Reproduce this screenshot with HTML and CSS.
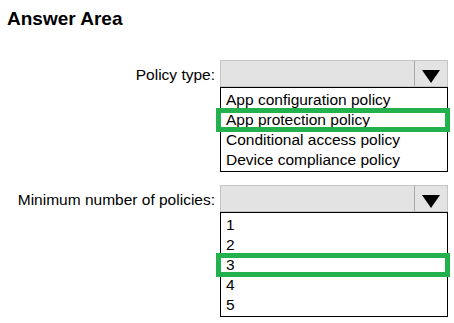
FILE: index.html
```html
<!DOCTYPE html>
<html lang="en">
<head>
  <meta charset="UTF-8">
  <meta name="viewport" content="width=device-width, initial-scale=1.0">
  <title>Answer Area</title>
  <link rel="stylesheet" href="styles.css">
</head>
<body>
  <h1 class="title">Answer Area</h1>

  <div class="answers">
    <div class="field-label">Policy type:</div>
    <div class="picker">
      <div class="picker-box"><span class="picker-arrow"></span></div>
      <ul class="picker-list">
        <li>App configuration policy</li>
        <li class="picked">App protection policy</li>
        <li>Conditional access policy</li>
        <li>Device compliance policy</li>
      </ul>
    </div>

    <div class="field-label">Minimum number of policies:</div>
    <div class="picker">
      <div class="picker-box"><span class="picker-arrow"></span></div>
      <ul class="picker-list">
        <li>1</li>
        <li>2</li>
        <li class="picked">3</li>
        <li>4</li>
        <li>5</li>
      </ul>
    </div>
  </div>
</body>
</html>
```

FILE: styles.css
```css
* {
  margin: 0;
  padding: 0;
  box-sizing: border-box;
}

body {
  background-color: #fff;
  color: #000;
  font-family: 'Liberation Sans', Arial, sans-serif;
  font-size: 15.5px;
  width: 454px;
  height: 323px;
  overflow: hidden;
}

.title {
  font-size: 19px;
  font-weight: bold;
  line-height: 22px;
  padding: 8px 0 0 7px;
  margin-bottom: 30px;
}

.answers {
  display: grid;
  grid-template-columns: 215px 228px;
  column-gap: 5px;
  row-gap: 13px;
}

.field-label {
  text-align: right;
  line-height: 20px;
  margin-top: 5px;
}

.picker-box {
  height: 27px;
  background-color: #e3e3e3;
  border: 1px solid #c4c4c4;
  display: flex;
  justify-content: flex-end;
}

.picker-arrow {
  width: 33px;
  border-left: 1px solid #a8a8a8;
  display: flex;
  justify-content: center;
  padding-top: 9px;
}

.picker-arrow::before {
  content: '';
  width: 0;
  height: 0;
  border-left: 9.5px solid transparent;
  border-right: 9.5px solid transparent;
  border-top: 13px solid #000;
}

.picker-list {
  list-style: none;
  border: 1px solid #000;
  padding: 2px 0 1px;
}

.picker-list li {
  line-height: 20px;
  padding-left: 5px;
  position: relative;
}

.picker-list li.picked::after {
  content: '';
  position: absolute;
  top: -2px;
  bottom: -2px;
  left: -5px;
  right: -3px;
  border: 5px solid #22b14c;
}
```
